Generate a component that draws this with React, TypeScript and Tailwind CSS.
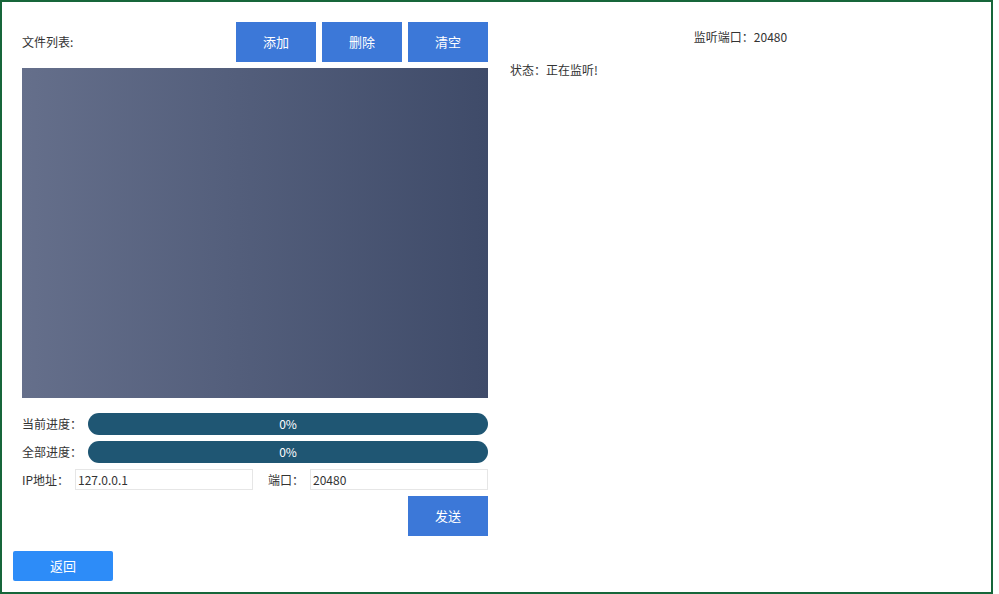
// File transfer window - list, progress bars, target address and listener status

export default function App() {
  return (
    <div
      className="w-[999px] h-[594px] bg-white text-[12px] text-[#333]"
      style={{ fontFamily: '"Noto Sans CJK SC", "Liberation Sans", sans-serif' }}
    >
      <div className="w-[993px] h-[594px] border-2 border-[#17663a] flex flex-col">
        <div className="flex flex-1">
          {/* Left column: sender */}
          <div className="w-[486px] pl-[20px] pt-[20px] flex flex-col">
            <div className="flex items-center h-[40px]">
              <span className="flex-1">文件列表:</span>
              <div className="flex gap-[6px]">
                <button className="w-[80px] h-[40px] bg-[#3c78d8] text-white text-[13px]">添加</button>
                <button className="w-[80px] h-[40px] bg-[#3c78d8] text-white text-[13px]">删除</button>
                <button className="w-[80px] h-[40px] bg-[#3c78d8] text-white text-[13px]">清空</button>
              </div>
            </div>

            <div className="mt-[6px] h-[330px] bg-gradient-to-r from-[#656f8b] to-[#3f4b69]" />

            {/* Progress */}
            <div className="mt-[15px] flex items-center h-[22px]">
              <span className="w-[66px]">当前进度：</span>
              <div className="flex-1 h-[22px] rounded-full bg-[#1f5673] text-white flex items-center justify-center">0%</div>
            </div>
            <div className="mt-[6px] flex items-center h-[22px]">
              <span className="w-[66px]">全部进度：</span>
              <div className="flex-1 h-[22px] rounded-full bg-[#1f5673] text-white flex items-center justify-center">0%</div>
            </div>

            {/* Address */}
            <div className="mt-[6px] flex items-center h-[21px]">
              <span className="w-[53px]">IP地址：</span>
              <input
                className="w-[178px] h-[21px] border border-[#e6e6e6] px-[2px] text-[12px] outline-none"
                defaultValue="127.0.0.1"
              />
              <span className="w-[57px] pl-[15px]">端口：</span>
              <input
                className="w-[178px] h-[21px] border border-[#e6e6e6] px-[2px] text-[12px] outline-none"
                defaultValue="20480"
              />
            </div>

            <div className="mt-[6px] flex justify-end">
              <button className="w-[80px] h-[40px] bg-[#3c78d8] text-white text-[13px]">发送</button>
            </div>
          </div>

          {/* Right column: receiver */}
          <div className="flex-1 pl-[22px] pr-[20px] pt-[26px]">
            <div className="text-center">监听端口：20480</div>
            <div className="mt-[15px]">状态：正在监听!</div>
          </div>
        </div>

        <div className="pl-[11px] pb-[11px]">
          <button className="w-[100px] h-[30px] bg-[#2d8cf8] text-white text-[13px] rounded-[2px]">返回</button>
        </div>
      </div>
    </div>
  );
}
